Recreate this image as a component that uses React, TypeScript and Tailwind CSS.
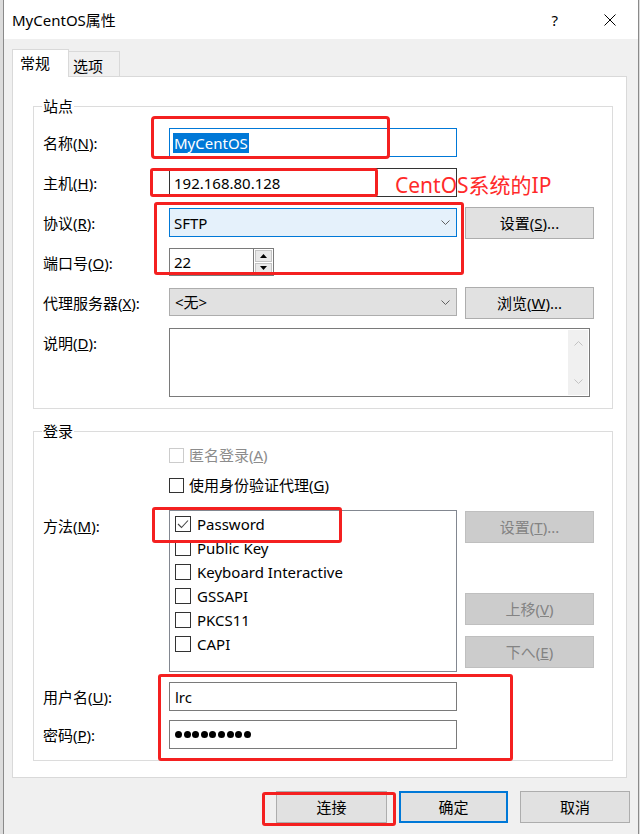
import React from "react";

function Chevron({ up, color = "#606060" }: { up?: boolean; color?: string }) {
  return (
    <svg width="9" height="5" viewBox="0 0 9 5" className="shrink-0">
      <polyline
        points={up ? "0.5,4.5 4.5,0.5 8.5,4.5" : "0.5,0.5 4.5,4.5 8.5,0.5"}
        fill="none"
        stroke={color}
        strokeWidth="1"
      />
    </svg>
  );
}

function Tri({ up }: { up?: boolean }) {
  return (
    <svg width="7" height="4" viewBox="0 0 7 4">
      <polygon points={up ? "0,4 7,4 3.5,0" : "0,0 7,0 3.5,4"} fill="#000" />
    </svg>
  );
}

function Box({ checked, disabled, big }: { checked?: boolean; disabled?: boolean; big?: boolean }) {
  return (
    <span
      className={`flex shrink-0 items-center justify-center border bg-white ${
        big ? "h-[16px] w-[16px]" : "h-[15px] w-[15px]"
      } ${disabled ? "border-[#cccccc]" : "border-[#333333]"}`}
    >
      {checked && (
        <svg width="12" height="10" viewBox="0 0 12 10">
          <polyline points="1,5 4.5,8.5 11,1.5" fill="none" stroke="#444" strokeWidth="1.1" />
        </svg>
      )}
    </span>
  );
}

function Btn({
  children,
  disabled,
  className = "",
}: {
  children: React.ReactNode;
  disabled?: boolean;
  className?: string;
}) {
  return (
    <div
      className={`flex h-[32px] w-[129px] shrink-0 items-center justify-center border ${
        disabled
          ? "border-[#bfbfbf] bg-[#cccccc] text-[#838383]"
          : "border-[#adadad] bg-[#e1e1e1] text-black"
      } ${className}`}
    >
      {children}
    </div>
  );
}

function Row({
  label,
  children,
  className = "",
}: {
  label: React.ReactNode;
  children: React.ReactNode;
  className?: string;
}) {
  return (
    <div className={`flex h-[29px] items-center ${className}`}>
      <div className="w-[126px] shrink-0">{label}</div>
      {children}
    </div>
  );
}

const methods = ["Password", "Public Key", "Keyboard Interactive", "GSSAPI", "PKCS11", "CAPI"];

export default function App() {
  return (
    <div className="relative flex h-[834px] w-[640px] overflow-hidden bg-[#dadada] font-['Noto_Sans','Noto_Sans_CJK_SC',sans-serif] text-[15px] leading-[20px] text-black">
      <div className="w-[3px] shrink-0 bg-[#dcdcdc]" />
      <div className="flex w-[636px] shrink-0 flex-col border-x border-[#8a8a8a] bg-[#f0f0f0]">
        {/* title bar */}
        <div className="flex h-[39px] shrink-0 items-center bg-white pl-[8px]">
          <span>MyCentOS属性</span>
          <span className="ml-auto mr-[46px]">?</span>
          <svg width="12" height="12" viewBox="0 0 12 12" className="mr-[22px]">
            <path d="M0.5 0.5 L11.5 11.5 M11.5 0.5 L0.5 11.5" stroke="#000" strokeWidth="1" />
          </svg>
        </div>

        {/* tabs */}
        <div className="mt-[10px] flex h-[27px] items-end pl-[8px]">
          <div className="relative z-10 -mb-px h-[28px] w-[57px] border-x border-t border-[#d9d9d9] bg-white pl-[7px] pt-[3px]">
            常规
          </div>
          <div className="h-[25px] w-[51px] border-r border-t border-[#d9d9d9] pl-[4px] pt-[4px]">选项</div>
        </div>

        {/* panel */}
        <div className="ml-[8px] h-[702px] w-[615px] border border-[#d9d9d9] bg-white pl-[20px] pt-[19px]">
          <fieldset className="w-[580px] border border-[#dcdcdc] px-[9px] pb-[11px] pt-[12px]">
            <legend className="-ml-[1px] px-[1px]">站点</legend>
            <Row label={<>名称(<u>N</u>):</>}>
              <div className="flex h-[29px] w-[288px] items-center border border-[#0078d7] bg-white pl-[3px]">
                <span className="bg-[#0078d7] px-px text-white">MyCentOS</span>
              </div>
            </Row>
            <Row className="mt-[11px]" label={<>主机(<u>H</u>):</>}>
              <div className="flex h-[29px] w-[288px] items-center border border-[#333333] bg-white pl-[4px]">
                192.168.80.128
              </div>
            </Row>
            <Row className="mt-[11px]" label={<>协议(<u>R</u>):</>}>
              <div className="flex h-[29px] w-[288px] items-center border border-[#0078d7] bg-[#e5f1fb] pl-[4px] pr-[6px]">
                <span>SFTP</span>
                <span className="ml-auto">
                  <Chevron />
                </span>
              </div>
              <Btn className="ml-[8px]">
                设置(<u>S</u>)...
              </Btn>
            </Row>
            <Row className="mt-[11px]" label={<>端口号(<u>O</u>):</>}>
              <div className="flex h-[28px] w-[105px] self-start">
                <div className="flex h-[28px] w-[85px] items-center border border-[#7a7a7a] bg-white pl-[4px]">22</div>
                <div className="flex w-[20px] flex-col border-y border-r border-[#7a7a7a] bg-white p-px">
                  <div className="flex h-[12px] items-center justify-center border border-[#c4c4c4] bg-[#e9e9e9]">
                    <Tri up />
                  </div>
                  <div className="mt-px flex h-[12px] items-center justify-center border border-[#c4c4c4] bg-[#e9e9e9]">
                    <Tri />
                  </div>
                </div>
              </div>
            </Row>
            <Row className="mt-[11px]" label={<>代理服务器(<u>X</u>):</>}>
              <div className="flex h-[28px] w-[288px] items-center self-start border border-[#adadad] bg-[#e1e1e1] pl-[5px] pr-[6px]">
                <span>&lt;无&gt;</span>
                <span className="ml-auto">
                  <Chevron />
                </span>
              </div>
              <Btn className="ml-[8px]">
                浏览(<u>W</u>)...
              </Btn>
            </Row>
            <div className="mt-[11px] flex">
              <div className="w-[126px] shrink-0 pt-[5px]">
                说明(<u>D</u>):
              </div>
              <div className="flex h-[69px] w-[421px] justify-end border border-[#7a7a7a] bg-white p-px">
                <div className="flex w-[20px] flex-col items-center justify-between bg-[#f0f0f0] py-[11px]">
                  <Chevron up color="#c2c2c2" />
                  <Chevron color="#c2c2c2" />
                </div>
              </div>
            </div>
          </fieldset>

          <fieldset className="mt-[12px] w-[580px] border border-[#dcdcdc] px-[9px] pb-[11px] pt-[4px]">
            <legend className="-ml-[1px] px-[1px]">登录</legend>
            <div className="ml-[126px] flex h-[20px] items-center gap-[5px] text-[#8c8c8c]">
              <Box disabled />
              <span>
                匿名登录(<u>A</u>)
              </span>
            </div>
            <div className="ml-[126px] mt-[10px] flex h-[20px] items-center gap-[5px]">
              <Box />
              <span>
                使用身份验证代理(<u>G</u>)
              </span>
            </div>
            <div className="mt-[15px] flex">
              <div className="w-[126px] shrink-0 pt-[6px]">
                方法(<u>M</u>):
              </div>
              <div className="h-[162px] w-[288px] border border-[#828790] bg-white pl-[5px] pt-px">
                {methods.map((m, i) => (
                  <div key={m} className="flex h-[24px] items-center gap-[6px]">
                    <Box big checked={i === 0} />
                    <span>{m}</span>
                  </div>
                ))}
              </div>
              <div className="ml-[8px] flex flex-col">
                <Btn disabled className="mt-px">
                  设置(<u>T</u>)...
                </Btn>
                <Btn disabled className="mt-[50px]">
                  上移(<u>V</u>)
                </Btn>
                <Btn disabled className="mt-[11px]">
                  下へ(<u>E</u>)
                </Btn>
              </div>
            </div>
            <Row className="mt-[10px]" label={<>用户名(<u>U</u>):</>}>
              <div className="flex h-[29px] w-[288px] items-center border border-[#7a7a7a] bg-white pl-[5px]">lrc</div>
            </Row>
            <Row className="mt-[9px]" label={<>密码(<u>P</u>):</>}>
              <div className="flex h-[29px] w-[288px] items-center gap-[1.6px] border border-[#7a7a7a] bg-white pl-[5px]">
                {Array.from({ length: 9 }).map((_, i) => (
                  <span key={i} className="h-[7px] w-[7px] rounded-full bg-black" />
                ))}
              </div>
            </Row>
          </fieldset>
        </div>

        {/* footer */}
        <div className="mt-[13px] flex justify-end gap-[12px] pr-[8px]">
          <div className="flex h-[32px] w-[111px] items-center justify-center border border-[#adadad] bg-[#e1e1e1]">连接</div>
          <div className="flex h-[32px] w-[109px] items-center justify-center border-2 border-[#0078d7] bg-[#e1e1e1]">确定</div>
          <div className="flex h-[32px] w-[110px] items-center justify-center border border-[#adadad] bg-[#e1e1e1]">取消</div>
        </div>
      </div>
      <div className="w-px shrink-0 bg-[#dcdcdc]" />

      {/* annotations */}
      <div className="pointer-events-none absolute left-[151px] top-[116px] h-[43px] w-[239px] rounded-[4px] border-[3px] border-[#f42020]" />
      <div className="pointer-events-none absolute left-[150px] top-[168px] h-[29px] w-[228px] rounded-[3px] border-[3px] border-[#f42020]" />
      <div className="pointer-events-none absolute left-[154px] top-[202px] h-[73px] w-[310px] rounded-[3px] border-[3px] border-[#f42020]" />
      <div className="pointer-events-none absolute left-[395px] top-[173px] text-[21px] leading-[24px] text-[#ff2a2a]">
        CentOS系统的IP
      </div>
      <div className="pointer-events-none absolute left-[152px] top-[507px] h-[36px] w-[190px] rounded-[3px] border-[3px] border-[#f42020]" />
      <div className="pointer-events-none absolute left-[158px] top-[674px] h-[87px] w-[355px] rounded-[3px] border-[3px] border-[#f42020]" />
      <div className="pointer-events-none absolute left-[262px] top-[792px] h-[34px] w-[134px] rounded-[3px] border-[3px] border-[#f42020]" />
    </div>
  );
}
